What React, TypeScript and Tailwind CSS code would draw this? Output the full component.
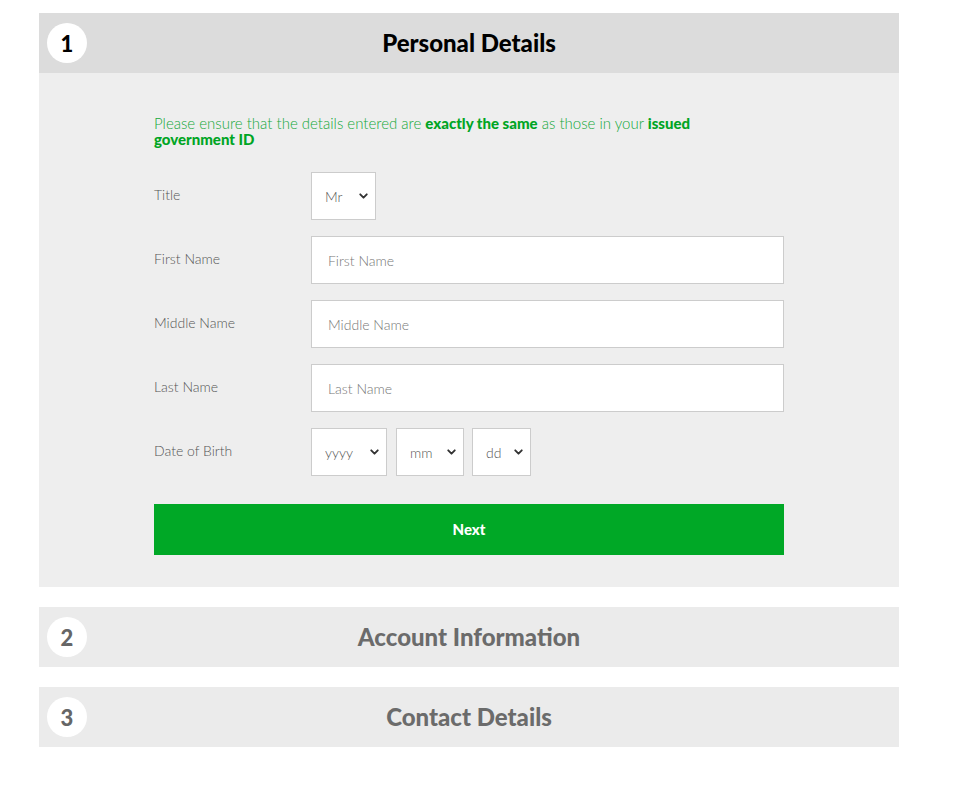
import React from "react";
import { ChevronDown } from "lucide-react";

const font = { fontFamily: "Lato, 'Open Sans', sans-serif" };

// ---------------------------------------------------------------------------
// Select with drawn chevron
// ---------------------------------------------------------------------------
function Picker({ value, width }: { value: string; width: string }) {
  return (
    <div className={`relative h-12 ${width} bg-white border border-[#cccccc]`}>
      <select
        defaultValue={value}
        className="w-full h-full appearance-none bg-transparent pl-[13px] text-[14px] font-light text-[#555] outline-none"
      >
        <option>{value}</option>
      </select>
      <ChevronDown
        className="absolute right-[5px] top-1/2 -translate-y-1/2 w-[13px] h-[13px] text-[#333] pointer-events-none"
        strokeWidth={3.5}
      />
    </div>
  );
}

function Row({ label, children }: { label: string; children: React.ReactNode }) {
  return (
    <div className="flex items-center">
      <label className="w-[157px] -mt-1 text-[14px] font-light text-[#555]">{label}</label>
      {children}
    </div>
  );
}

function TextField({ placeholder }: { placeholder: string }) {
  return (
    <input
      placeholder={placeholder}
      className="flex-1 h-12 bg-white border border-[#cccccc] px-4 text-[14px] font-light text-[#555] placeholder:text-[#777] outline-none"
    />
  );
}

function StepHeader({ n, title, active }: { n: number; title: string; active?: boolean }) {
  return (
    <div className={`relative h-[60px] flex items-center justify-center ${active ? "bg-[#dcdcdc]" : "bg-[#ebebeb]"}`}>
      <span
        className={`absolute left-2 top-1/2 -translate-y-1/2 w-10 h-10 rounded-full bg-white flex items-center justify-center text-[22px] font-black ${active ? "text-black" : "text-[#666]"}`}
      >
        {n}
      </span>
      <h2 className={`text-[24px] leading-none font-black ${active ? "text-black" : "text-[#6b6b6b]"}`}>{title}</h2>
    </div>
  );
}

export default function App() {
  return (
    <div className="min-h-[797px] bg-white pt-[13px] pl-[39px]" style={font}>
      <div className="w-[860px] flex flex-col gap-5">
        {/* Step 1 */}
        <section>
          <StepHeader n={1} title="Personal Details" active />
          <div className="bg-[#eeeeee] pt-[42px] pb-8 pl-[115px]">
            <div className="w-[630px] flex flex-col">
              <p className="text-[15px] leading-4 font-light text-[#14a83a] pr-[60px]">
                Please ensure that the details entered are{" "}
                <b className="font-black text-[#00a524]">exactly the same</b> as those in your{" "}
                <b className="font-black text-[#00a524]">issued</b>{" "}
                <b className="font-black text-[#00a524]">government ID</b>
              </p>

              <div className="flex flex-col gap-4 mt-[25px]">
                <Row label="Title">
                  <Picker value="Mr" width="w-[65px]" />
                </Row>
                <Row label="First Name">
                  <TextField placeholder="First Name" />
                </Row>
                <Row label="Middle Name">
                  <TextField placeholder="Middle Name" />
                </Row>
                <Row label="Last Name">
                  <TextField placeholder="Last Name" />
                </Row>
                <Row label="Date of Birth">
                  <div className="flex">
                    <Picker value="yyyy" width="w-[76px]" />
                    <div className="w-[9px]" />
                    <Picker value="mm" width="w-[68px]" />
                    <div className="w-2" />
                    <Picker value="dd" width="w-[59px]" />
                  </div>
                </Row>
              </div>

              <button
                type="button"
                className="mt-7 h-[51px] bg-[#00a826] text-white text-[15px] font-black"
              >
                Next
              </button>
            </div>
          </div>
        </section>

        <StepHeader n={2} title="Account Information" />
        <StepHeader n={3} title="Contact Details" />
      </div>
    </div>
  );
}
